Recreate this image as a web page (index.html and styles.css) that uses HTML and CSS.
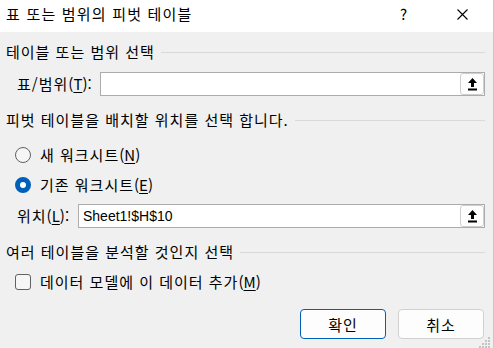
FILE: index.html
```html
<!DOCTYPE html>
<html lang="ko">
<head>
    <meta charset="UTF-8">
    <title>표 또는 범위의 피벗 테이블</title>
    <link rel="stylesheet" href="styles.css">
</head>
<body>
    <div class="dialog">
        <div class="titlebar">
            <span class="title">표 또는 범위의 피벗 테이블</span>
            <span class="help">?</span>
            <span class="close">
                <svg width="11" height="11" viewBox="0 0 11 11"><path d="M0.5 0.5L10.5 10.5M10.5 0.5L0.5 10.5" stroke="#000" stroke-width="1.1"/></svg>
            </span>
        </div>

        <div class="content">
            <div class="group-title first">
                <span>테이블 또는 범위 선택</span>
                <div class="rule"></div>
            </div>
            <div class="field-row range-row">
                <label class="field-label">표/범위<span class="key">(<u>T</u>):</span></label>
                <div class="field-input">
                    <span class="field-value"></span>
                    <button class="pick-btn">
                        <svg width="9" height="13" viewBox="0 0 9 13"><path d="M4.5 0L9 5H6V9H3V5H0Z" fill="#000"/><rect x="0" y="10.5" width="9" height="2" fill="#000"/></svg>
                    </button>
                </div>
            </div>

            <div class="group-title second">
                <span>피벗 테이블을 배치할 위치를 선택 합니다.</span>
                <div class="rule"></div>
            </div>
            <div class="option radio-first">
                <span class="radio"></span>
                <span>새 워크시트<span class="key">(<u>N</u>)</span></span>
            </div>
            <div class="option radio-second">
                <span class="radio checked"></span>
                <span>기존 워크시트<span class="key">(<u>E</u>)</span></span>
            </div>
            <div class="field-row place-row">
                <label class="field-label">위치<span class="key">(<u>L</u>):</span></label>
                <div class="field-input">
                    <span class="field-value">Sheet1!$H$10</span>
                    <button class="pick-btn">
                        <svg width="9" height="13" viewBox="0 0 9 13"><path d="M4.5 0L9 5H6V9H3V5H0Z" fill="#000"/><rect x="0" y="10.5" width="9" height="2" fill="#000"/></svg>
                    </button>
                </div>
            </div>

            <div class="group-title third">
                <span>여러 테이블을 분석할 것인지 선택</span>
                <div class="rule"></div>
            </div>
            <div class="option check-row">
                <span class="checkbox"></span>
                <span>데이터 모델에 이 데이터 추가<span class="key">(<u>M</u>)</span></span>
            </div>

            <div class="buttons">
                <button class="btn primary">확인</button>
                <button class="btn">취소</button>
            </div>
        </div>

        <svg class="grip" width="12" height="12" viewBox="0 0 12 12">
            <rect x="9" y="1" width="2" height="2" fill="#c4c4c4"/>
            <rect x="6" y="4" width="2" height="2" fill="#c4c4c4"/>
            <rect x="9" y="4" width="2" height="2" fill="#c4c4c4"/>
            <rect x="3" y="7" width="2" height="2" fill="#c4c4c4"/>
            <rect x="6" y="7" width="2" height="2" fill="#c4c4c4"/>
            <rect x="9" y="7" width="2" height="2" fill="#c4c4c4"/>
            <rect x="0" y="10" width="2" height="2" fill="#c4c4c4"/>
            <rect x="3" y="10" width="2" height="2" fill="#c4c4c4"/>
            <rect x="6" y="10" width="2" height="2" fill="#c4c4c4"/>
            <rect x="9" y="10" width="2" height="2" fill="#c4c4c4"/>
        </svg>
    </div>
</body>
</html>
```

FILE: styles.css
```css
* {
    margin: 0;
    padding: 0;
    box-sizing: border-box;
}

body {
    background-color: #f0f0f0;
    font-family: 'Noto Sans CJK KR', sans-serif;
    font-size: 15px;
    line-height: 20px;
    letter-spacing: 1px;
    color: #000;
}

.key {
    letter-spacing: 0;
}

.dialog {
    position: relative;
    width: 494px;
    height: 348px;
    border-right: 1px solid #c9c9c9;
    background-color: #f0f0f0;
}

.titlebar {
    display: flex;
    align-items: center;
    height: 32px;
    padding-left: 6px;
    padding-bottom: 4px;
    background-color: #fff;
}

.title {
    flex: 1;
    letter-spacing: 1.2px;
}

.help {
    width: 12px;
    margin-right: 45px;
    letter-spacing: 0;
}

.close {
    display: flex;
    margin-right: 25px;
}

.content {
    display: flex;
    flex-direction: column;
    padding: 0 8px 0 6px;
}

.group-title {
    display: flex;
    align-items: center;
    gap: 6px;
    height: 20px;
}

.group-title .rule {
    flex: 1;
    height: 1px;
    background-color: #d9d9d9;
}

.group-title.first { margin-top: 10px; }
.group-title.second { margin-top: 14px; }
.group-title.third { margin-top: 14px; }

.field-row {
    display: flex;
    align-items: center;
    height: 24px;
    padding-left: 11px;
}

.range-row { margin-top: 10px; }
.place-row { margin-top: 9px; }

.range-row .field-label { width: 83px; }
.place-row .field-label { width: 61px; }

.field-input {
    flex: 1;
    display: flex;
    align-items: center;
    height: 24px;
    border: 1px solid #acacac;
    background-color: #fff;
    padding-left: 4px;
}

.field-value {
    flex: 1;
    font-family: 'Liberation Sans', sans-serif;
    font-size: 14px;
    letter-spacing: 0;
}

.pick-btn {
    display: flex;
    align-items: center;
    justify-content: center;
    width: 24px;
    height: 22px;
    border: 1px solid #cfcfcf;
    border-radius: 3px;
    background-color: #fdfdfd;
}

.option {
    display: flex;
    align-items: center;
    gap: 9px;
    height: 20px;
    padding-left: 9px;
}

.radio-first { margin-top: 15px; }
.radio-second { margin-top: 10px; }
.check-row { margin-top: 10px; }

.radio {
    width: 16px;
    height: 16px;
    border: 1px solid #616161;
    border-radius: 50%;
    background-color: #f6f6f6;
}

.radio.checked {
    border: 5px solid #005fb8;
    background-color: #fff;
}

.checkbox {
    width: 16px;
    height: 16px;
    border: 1px solid #616161;
    border-radius: 3px;
    background-color: #f6f6f6;
}

.buttons {
    display: flex;
    justify-content: flex-end;
    gap: 12px;
    margin-top: 17px;
    padding-right: 1px;
}

.btn {
    width: 86px;
    height: 30px;
    border: 1px solid #d0d0d0;
    border-radius: 4px;
    background-color: #fdfdfd;
    font-family: 'Noto Sans CJK KR', sans-serif;
    font-size: 15px;
    letter-spacing: 1px;
    color: #000;
}

.btn.primary {
    border-color: #005fb8;
}

u {
    text-underline-offset: 2px;
}

.grip {
    position: absolute;
    right: 2px;
    bottom: 0;
}
```
